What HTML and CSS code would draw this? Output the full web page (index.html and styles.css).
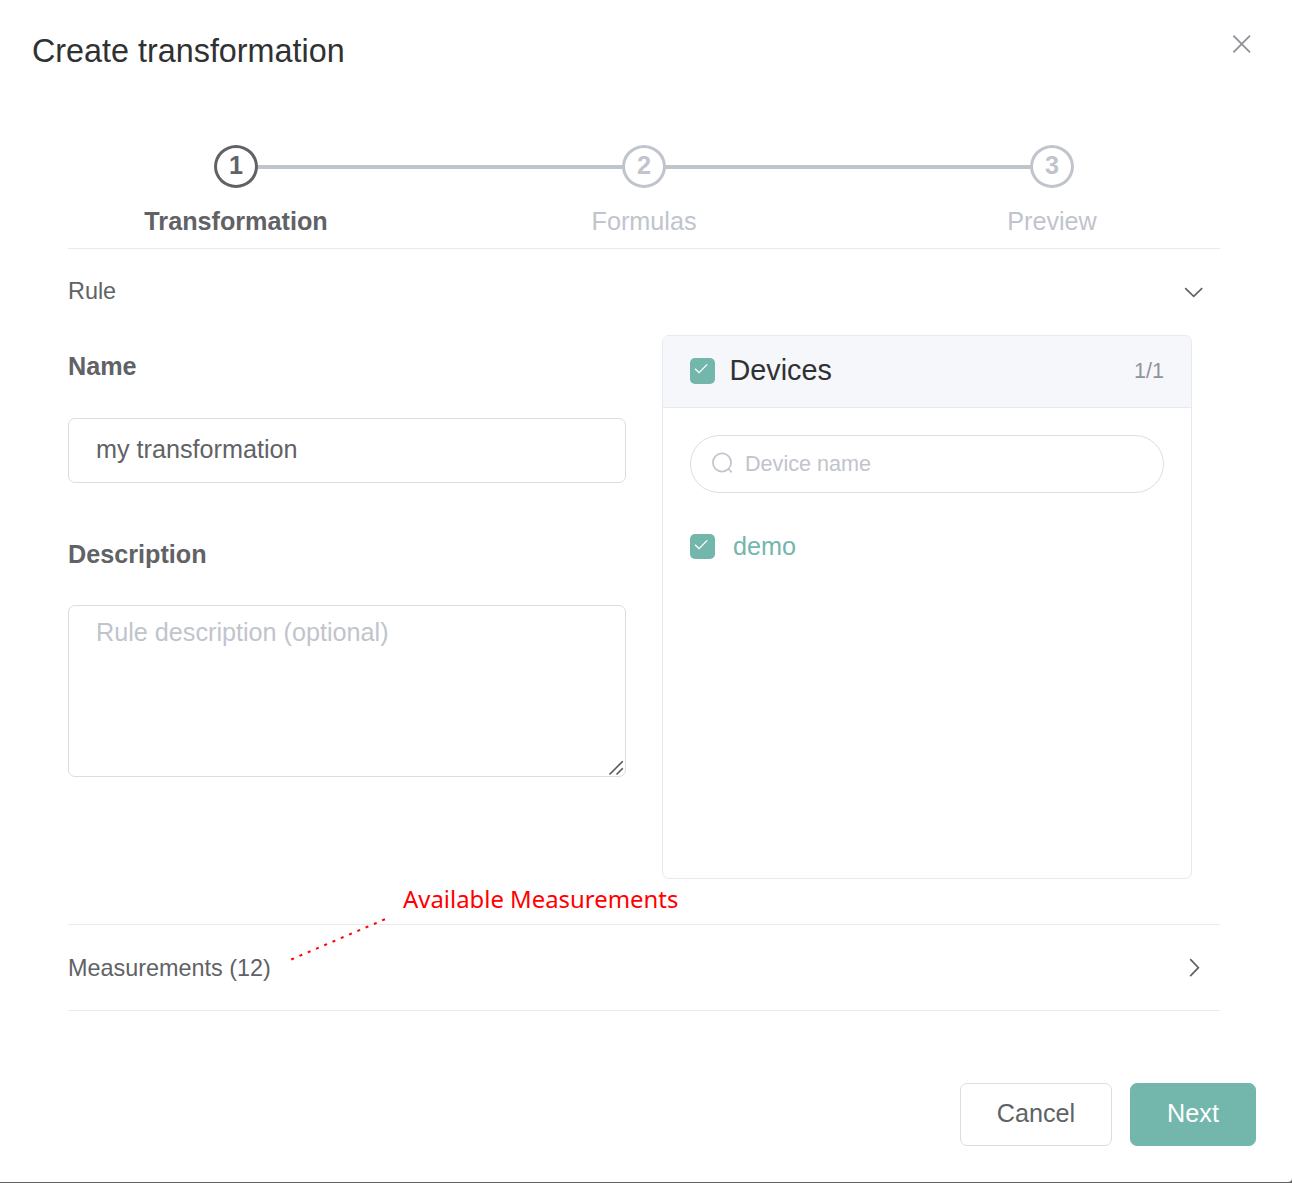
FILE: index.html
```html
<!DOCTYPE html>
<html lang="en">
<head>
<meta charset="utf-8">
<title>Create transformation</title>
<link rel="stylesheet" href="styles.css">
</head>
<body>
<div class="dialog">
  <header class="dialog-header">
    <h1 class="dialog-title">Create transformation</h1>
    <svg class="close" width="20" height="20" viewBox="0 0 20 20"><path d="M1.4 1.7 18 18.3M18 1.7 1.4 18.3"/></svg>
  </header>

  <div class="steps">
    <div class="step active"><div class="track"><span class="circle">1</span></div><div class="step-title">Transformation</div></div>
    <div class="step"><div class="track"><span class="circle">2</span></div><div class="step-title">Formulas</div></div>
    <div class="step"><div class="track"><span class="circle">3</span></div><div class="step-title">Preview</div></div>
  </div>

  <main class="sections">
    <section class="section">
      <div class="section-header rule-header">
        <span>Rule</span>
        <svg class="arrow" width="20" height="20" viewBox="0 0 20 20"><path d="M1.2 6.2 9.7 14.4 18.2 6.2"/></svg>
      </div>
      <div class="section-body">
        <form class="form">
          <label class="label" for="name">Name</label>
          <input class="field name-field" id="name" value="my transformation">
          <label class="label description-label" for="description">Description</label>
          <div class="textarea-wrap">
            <textarea class="field description-field" id="description" placeholder="Rule description (optional)"></textarea>
            <svg class="grip" width="16" height="16" viewBox="0 0 16 16"><path d="M1.5 14.5 14.8 1.2M8.5 14.5 14.8 8.2"/></svg>
          </div>
        </form>
        <div class="panel">
          <div class="panel-header">
            <span class="checkbox"><svg width="25" height="25" viewBox="0 0 25 25"><path d="M5 10.7 9.1 14.7 17.2 6.4"/></svg></span>
            <span class="panel-title">Devices</span>
            <span class="count">1/1</span>
          </div>
          <div class="search">
            <svg class="search-icon" width="22" height="22" viewBox="0 0 22 22"><circle cx="11" cy="10.5" r="9.1"/><path d="M17.3 17 20.8 20.4"/></svg>
            <input class="search-input" placeholder="Device name">
          </div>
          <div class="device">
            <span class="checkbox"><svg width="25" height="25" viewBox="0 0 25 25"><path d="M5 10.7 9.1 14.7 17.2 6.4"/></svg></span>
            <span>demo</span>
          </div>
        </div>
      </div>
    </section>
    <section class="section">
      <div class="section-header measurements-header">
        <span>Measurements (12)</span>
        <svg class="arrow" width="20" height="20" viewBox="0 0 20 20"><path d="M6.2 1.2 14.4 9.7 6.2 18.2"/></svg>
      </div>
    </section>
  </main>

  <footer class="footer">
    <button class="button">Cancel</button>
    <button class="button primary">Next</button>
  </footer>

  <svg class="callout-line" width="100" height="46" viewBox="0 0 100 46"><path d="M2.2 43.5 96.5 3"/></svg>
  <span class="callout-text">Available Measurements</span>
</div>
</body>
</html>
```
FILE: styles.css
```css
* { box-sizing: border-box; }
body {
  margin: 0;
  background: #606266;
  font-family: "Liberation Sans", Arial, sans-serif;
  font-size: 25.2px;
  color: #606266;
}
svg { display: block; fill: none; flex: none; }
.dialog {
  position: relative;
  height: 1182px;
  padding: 0 36px 0 32px;
  background: #fff;
  border-bottom-right-radius: 4px;
  overflow: hidden;
}
.dialog-header {
  display: flex;
  justify-content: space-between;
  height: 145px;
  padding-top: 34px;
}
.dialog-title {
  margin: 0;
  font-size: 32.35px;
  line-height: 34px;
  font-weight: 400;
  color: #303133;
}
.close { margin-right: 4px; stroke: #909399; stroke-width: 1.9; }

.steps { display: flex; height: 103px; }
.step { flex: 1; text-align: center; color: #c0c4cc; }
.track { position: relative; display: flex; justify-content: center; height: 43px; }
.step:not(:last-child) .track::after {
  content: "";
  position: absolute;
  left: 50%;
  top: 20px;
  width: 100%;
  height: 4px;
  background: #c0c4cc;
}
.circle {
  position: relative;
  z-index: 1;
  width: 44px;
  height: 43px;
  border: 3px solid;
  border-radius: 50%;
  background: #fff;
  font-weight: 700;
  line-height: 34px;
}
.step-title { line-height: 66px; }
.active { color: #606266; }
.active .step-title { font-weight: 700; }

.sections { margin: 0 36px; border-bottom: 1px solid #e8e8f2; }
.section { border-top: 1px solid #e8e8f2; }
.section-header {
  display: flex;
  align-items: center;
  justify-content: space-between;
  padding-right: 16px;
  font-size: 23.4px;
}
.rule-header { height: 86px; }
.rule-header span { padding-bottom: 2px; }
.measurements-header { height: 85px; }
.measurements-header span { padding-top: 2px; }
.arrow { stroke: #606266; stroke-width: 1.7; }
.section-body { display: flex; gap: 36px; padding-bottom: 45px; }

.form { display: flex; flex-direction: column; width: 558px; }
.label { line-height: 63px; font-weight: 700; }
.description-label { margin-top: 40px; }
.field {
  display: block;
  width: 100%;
  border: 1px solid #dcdce5;
  border-radius: 7px;
  padding: 0 27px;
  background: #fff;
  font: inherit;
  color: #606266;
  outline: none;
}
.name-field { height: 65px; margin-top: 20px; padding-bottom: 2px; }
.textarea-wrap { position: relative; margin-top: 19px; }
.description-field { height: 172px; padding-top: 7px; line-height: 38px; resize: none; }
::placeholder { color: #c0c4cc; opacity: 1; }
.grip { position: absolute; right: 2px; bottom: 1px; stroke: #55575a; stroke-width: 1.6; }

.panel { width: 530px; height: 544px; border: 1px solid #e8e8f2; border-radius: 7px; overflow: hidden; }
.panel-header {
  display: flex;
  align-items: center;
  height: 72px;
  padding: 0 27px 2px;
  border-bottom: 1px solid #e8e8f2;
  background: #f5f7fb;
}
.checkbox { flex: none; width: 25px; height: 25px; border-radius: 5px; background: #73b6ab; }
.panel-header .checkbox { height: 26px; }
.checkbox svg { stroke: #fff; stroke-width: 1.3; }
.panel-title { margin-left: 14.5px; padding-bottom: 1px; font-size: 28.8px; line-height: 34px; color: #303133; }
.count { margin-left: auto; font-size: 21.6px; color: #909399; }
.search {
  display: flex;
  align-items: center;
  height: 58px;
  margin: 27px 27px 0;
  padding: 0 20px;
  border: 1px solid #dcdce5;
  border-radius: 29px;
}
.search-icon { margin-bottom: 2px; stroke: #c0c4cc; stroke-width: 1.7; }
.search-input {
  flex: 1;
  min-width: 0;
  margin-left: 12px;
  padding: 0;
  border: 0;
  outline: 0;
  background: none;
  font: inherit;
  font-size: 21.6px;
}
.device { display: flex; align-items: center; gap: 18px; height: 54px; margin: 26px 27px 0; color: #73b6ab; }

.footer { display: flex; justify-content: flex-end; gap: 18px; margin-top: 72px; }
.button {
  width: 152px;
  height: 63px;
  padding: 0 0 2px;
  border: 1px solid #dcdce5;
  border-radius: 7px;
  background: #fff;
  font: inherit;
  color: #606266;
}
.primary { width: 126px; border-color: #73b6ab; background: #73b6ab; color: #fff; }

.callout-line { position: absolute; left: 289px; top: 916px; stroke: #f00; stroke-width: 2; stroke-dasharray: 3 6; }
.callout-text {
  position: absolute;
  left: 403px;
  top: 882px;
  font: 23.9px/34px "Noto Sans", sans-serif;
  color: #f00;
  white-space: nowrap;
}
```
